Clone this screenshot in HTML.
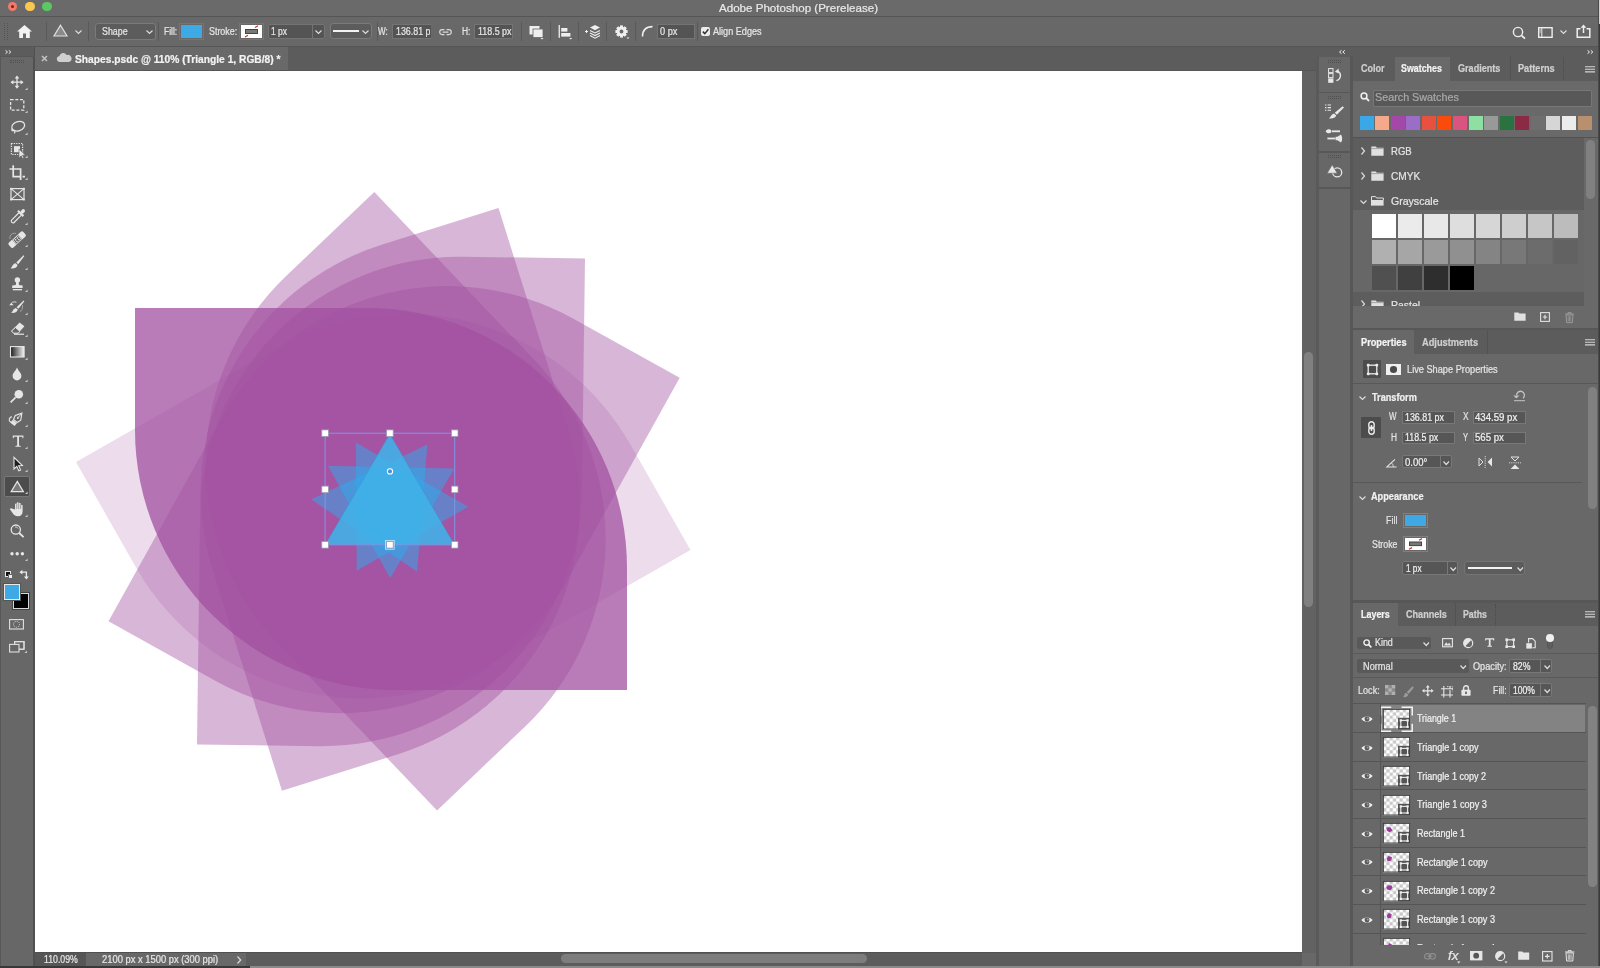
<!DOCTYPE html>
<html><head><meta charset="utf-8"><title>Adobe Photoshop (Prerelease)</title>
<style>
*{box-sizing:border-box}
html,body{margin:0;padding:0}
body{width:1600px;height:968px;overflow:hidden;position:relative;background:#505050;will-change:transform;font-family:"Liberation Sans",sans-serif;font-size:10px;color:#e0e0e0;line-height:1}
.a{position:absolute}
.t{position:absolute;white-space:nowrap;line-height:12px;height:12px;-webkit-text-stroke:0.22px currentColor}
.b{font-weight:bold}
.sep{position:absolute;width:1px}
.inp{position:absolute;background:#545454;border:1px solid #747474;border-radius:2px}
.ic{position:absolute;overflow:visible}
svg{display:block}
</style></head><body>

<!-- part_top -->
<div class="a" style="left:0px;top:0px;width:1600px;height:16px;background:#6a6a6a;"></div>
<div class="a" style="left:7.6px;top:1.7px;width:9.8px;height:9.8px;background:#f07a6c;border-radius:50%"></div>
<div class="a" style="left:10.8px;top:4.9px;width:3.4px;height:3.4px;background:#8b1a10;border-radius:50%"></div>
<div class="a" style="left:24.8px;top:1.7px;width:9.8px;height:9.8px;background:#f8c850;border-radius:50%"></div>
<div class="a" style="left:42.1px;top:1.7px;width:9.8px;height:9.8px;background:#5cc862;border-radius:50%"></div>
<div class="t" style="left:719px;top:2px;font-size:11.5px;color:#e8e8e8;transform-origin:0 0;transform:scaleX(1.0069);">Adobe Photoshop (Prerelease)</div>
<div class="a" style="left:0px;top:16px;width:1600px;height:1px;background:#555;"></div>
<div class="a" style="left:0px;top:17px;width:1600px;height:29px;background:#686868;"></div>
<div class="a" style="left:0px;top:46px;width:1600px;height:1px;background:#555;"></div>
<div class="a" style="left:4px;top:23px;width:2px;height:17px;background:transparent;border-left:1px dotted #555;border-right:1px dotted #555;width:4px"></div>
<svg class="ic" style="left:17px;top:25px" width="15" height="13" viewBox="0 0 15 13"><path d="M7.5 0 L0 6.6 L2.2 6.6 L2.2 13 L6 13 L6 8.6 L9 8.6 L9 13 L12.8 13 L12.8 6.6 L15 6.6 Z" fill="#f2f2f2"/></svg>
<div class="sep" style="left:46px;top:22px;height:19px;background:#595959"></div>
<svg class="ic" style="left:53px;top:24px" width="15" height="13" viewBox="0 0 15 13"><path d="M7.5 1.2 L14 12 L1 12 Z" fill="#8a8a8a" stroke="#e0e0e0" stroke-width="1.2" stroke-linejoin="miter"/></svg>
<svg class="ic" style="left:75px;top:30px" width="7" height="4" viewBox="0 0 7 4"><path d="M0.5 0.5 L3.5 3.5 L6.5 0.5" stroke="#dcdcdc" fill="none" stroke-width="1.2"/></svg>
<div class="sep" style="left:88px;top:22px;height:19px;background:#595959"></div>
<div class="inp" style="left:95px;top:23px;width:61px;height:17px;background:#5c5c5c;border-color:#7a7a7a;border-radius:3px"></div>
<div class="t" style="left:101.9px;top:25.5px;font-size:10px;color:#e6e6e6;transform-origin:0 0;transform:scaleX(0.8851);">Shape</div>
<svg class="ic" style="left:146px;top:30px" width="7" height="4" viewBox="0 0 7 4"><path d="M0.5 0.5 L3.5 3.5 L6.5 0.5" stroke="#dcdcdc" fill="none" stroke-width="1.2"/></svg>
<div class="sep" style="left:158px;top:22px;height:19px;background:#595959"></div>
<div class="t" style="left:163.7px;top:25.5px;font-size:10px;color:#e6e6e6;transform-origin:0 0;transform:scaleX(0.8482);">Fill:</div>
<div class="a" style="left:179px;top:23px;width:25px;height:17px;background:transparent;border:1px solid #747474"></div>
<div class="a" style="left:181px;top:25px;width:21px;height:13px;background:#3fa9e6;"></div>
<div class="t" style="left:208.7px;top:25.5px;font-size:10px;color:#e6e6e6;transform-origin:0 0;transform:scaleX(0.8899);">Stroke:</div>
<div class="a" style="left:239px;top:23px;width:25px;height:17px;background:transparent;border:1px solid #747474"></div>
<div class="a" style="left:241px;top:25px;width:21px;height:13px;background:#ffffff;"></div>
<svg class="ic" style="left:241px;top:25px" width="21" height="13" viewBox="0 0 21 13"><rect x="4.5" y="4.5" width="12" height="4" fill="#777" stroke="#444" stroke-width="1"/><path d="M14 2.5 L17 0.8 M4 12 L7 10.3" stroke="#c0392b" stroke-width="1.2"/></svg>
<div class="inp" style="left:268px;top:24px;width:57px;height:15px;border-radius:2px"></div>
<div class="a" style="left:312px;top:25px;width:1px;height:13px;background:#747474;"></div>
<div class="t" style="left:271.2px;top:25.5px;font-size:10px;color:#e6e6e6;transform-origin:0 0;transform:scaleX(0.8516);">1 px</div>
<svg class="ic" style="left:315px;top:30px" width="7" height="4" viewBox="0 0 7 4"><path d="M0.5 0.5 L3.5 3.5 L6.5 0.5" stroke="#dcdcdc" fill="none" stroke-width="1.2"/></svg>
<div class="inp" style="left:330px;top:23px;width:42px;height:16px;background:#5c5c5c;border-color:#7a7a7a;border-radius:3px"></div>
<div class="a" style="left:333px;top:30px;width:26px;height:2px;background:#f2f2f2;"></div>
<svg class="ic" style="left:362px;top:30px" width="7" height="4" viewBox="0 0 7 4"><path d="M0.5 0.5 L3.5 3.5 L6.5 0.5" stroke="#dcdcdc" fill="none" stroke-width="1.2"/></svg>
<div class="sep" style="left:377px;top:22px;height:19px;background:#595959"></div>
<div class="t" style="left:377.9px;top:25.5px;font-size:10px;color:#e6e6e6;transform-origin:0 0;transform:scaleX(0.8135);">W:</div>
<div class="inp" style="left:392px;top:24px;width:39px;height:15px;border-radius:0;border-right:none"></div>
<div class="a" style="left:395.5px;top:24px;width:34.5px;height:15px;overflow:hidden"><div class="t" style="left:0px;top:1.5px;font-size:10px;color:#e6e6e6;transform-origin:0 0;transform:scaleX(0.8876);">136.81 px</div></div>
<svg class="ic" style="left:439.2px;top:28.6px" width="13" height="6.2" viewBox="0 0 13 6.2"><path d="M5.4 0.6 L3.2 0.6 A2.5 2.5 0 0 0 3.2 5.6 L5.4 5.6 M7.6 0.6 L9.8 0.6 A2.5 2.5 0 0 1 9.8 5.6 L7.6 5.6 M3.6 3.1 L9.4 3.1" fill="none" stroke="#dcdcdc" stroke-width="1.15"/></svg>
<div class="t" style="left:461.6px;top:25.5px;font-size:10px;color:#e6e6e6;transform-origin:0 0;transform:scaleX(0.8400);">H:</div>
<div class="inp" style="left:474px;top:24px;width:39px;height:15px;border-radius:0"></div>
<div class="t" style="left:477.5px;top:25.5px;font-size:10px;color:#e6e6e6;transform-origin:0 0;transform:scaleX(0.8904);">118.5 px</div>
<div class="sep" style="left:521px;top:22px;height:19px;background:#595959"></div>
<svg class="ic" style="left:529px;top:25px" width="15" height="15" viewBox="0 0 15 15"><rect x="0.5" y="1" width="10" height="8.5" fill="#efefef"/><rect x="4" y="4" width="10" height="8.5" fill="#efefef" stroke="#686868" stroke-width="0.8"/><path d="M11.5 13 L14.5 13 L13 14.6 Z" fill="#efefef"/></svg>
<div class="sep" style="left:550px;top:22px;height:19px;background:#595959"></div>
<svg class="ic" style="left:558px;top:25px" width="15" height="15" viewBox="0 0 15 15"><rect x="0.6" y="0" width="1.3" height="12.8" fill="#efefef"/><rect x="3.2" y="3" width="6.2" height="3.6" fill="#efefef"/><rect x="3.2" y="8" width="9.2" height="3.6" fill="#efefef"/><path d="M11.2 13 L14.2 13 L12.7 14.6 Z" fill="#efefef"/></svg>
<div class="sep" style="left:578px;top:22px;height:19px;background:#595959"></div>
<svg class="ic" style="left:584px;top:24px" width="17" height="16" viewBox="0 0 17 16"><path d="M1 7.5 L4 7.5 M2.5 6 L2.5 9" stroke="#efefef" stroke-width="1"/><path d="M11 1 L16 3.6 L11 6.2 L6 3.6 Z" fill="#efefef"/><path d="M6 6.4 L11 9 L16 6.4 M6 9 L11 11.6 L16 9 M6 11.6 L11 14.2 L16 11.6" stroke="#efefef" stroke-width="1.1" fill="none"/></svg>
<div class="sep" style="left:606px;top:22px;height:19px;background:#595959"></div>
<svg class="ic" style="left:614.5px;top:25px" width="15" height="15" viewBox="0 0 15 15"><g transform="translate(6.5,6.5)"><rect x="-1.5" y="-6.1" width="3" height="3.4" fill="#efefef" transform="rotate(0)"/><rect x="-1.5" y="-6.1" width="3" height="3.4" fill="#efefef" transform="rotate(45)"/><rect x="-1.5" y="-6.1" width="3" height="3.4" fill="#efefef" transform="rotate(90)"/><rect x="-1.5" y="-6.1" width="3" height="3.4" fill="#efefef" transform="rotate(135)"/><rect x="-1.5" y="-6.1" width="3" height="3.4" fill="#efefef" transform="rotate(180)"/><rect x="-1.5" y="-6.1" width="3" height="3.4" fill="#efefef" transform="rotate(225)"/><rect x="-1.5" y="-6.1" width="3" height="3.4" fill="#efefef" transform="rotate(270)"/><rect x="-1.5" y="-6.1" width="3" height="3.4" fill="#efefef" transform="rotate(315)"/><circle r="3.4" fill="none" stroke="#efefef" stroke-width="2.9"/></g><path d="M11.5 12.4 L14.5 12.4 L13 14 Z" fill="#efefef"/></svg>
<div class="sep" style="left:635px;top:22px;height:19px;background:#595959"></div>
<svg class="ic" style="left:641px;top:25px" width="12" height="12" viewBox="0 0 12 12"><path d="M1.5 11.5 C1.5 5 5 1.6 11.5 1.6" fill="none" stroke="#efefef" stroke-width="1.6"/></svg>
<div class="inp" style="left:657px;top:24px;width:38px;height:15px;border-radius:0"></div>
<div class="t" style="left:659.6px;top:25.5px;font-size:10px;color:#e6e6e6;transform-origin:0 0;transform:scaleX(0.9203);">0 px</div>
<div class="sep" style="left:697px;top:22px;height:19px;background:#595959"></div>
<div class="a" style="left:700.5px;top:27px;width:9px;height:9px;background:#ececec;border-radius:2px"></div>
<svg class="ic" style="left:700.5px;top:27px" width="9" height="9" viewBox="0 0 9 9"><path d="M1.8 4.6 L3.8 6.6 L7.4 2.2" fill="none" stroke="#333" stroke-width="1.5"/></svg>
<div class="t" style="left:712.9px;top:25.5px;font-size:10px;color:#e6e6e6;transform-origin:0 0;transform:scaleX(0.9105);">Align Edges</div>
<svg class="ic" style="left:1512px;top:26px" width="15" height="14" viewBox="0 0 15 14"><circle cx="6" cy="6" r="4.6" fill="none" stroke="#efefef" stroke-width="1.4"/><path d="M9.4 9.4 L13 12.6" stroke="#efefef" stroke-width="1.8"/></svg>
<svg class="ic" style="left:1538px;top:27px" width="15" height="11" viewBox="0 0 15 11"><rect x="0.7" y="0.7" width="13.4" height="9.6" fill="none" stroke="#efefef" stroke-width="1.4"/><path d="M3.8 1 L3.8 10" stroke="#efefef" stroke-width="1"/><path d="M1.6 3 L3 3 M1.6 5 L3 5" stroke="#efefef" stroke-width="0.8"/></svg>
<svg class="ic" style="left:1560px;top:30px" width="7" height="4" viewBox="0 0 7 4"><path d="M0.5 0.5 L3.5 3.5 L6.5 0.5" stroke="#dcdcdc" fill="none" stroke-width="1.2"/></svg>
<svg class="ic" style="left:1576px;top:24px" width="15" height="14" viewBox="0 0 15 14"><path d="M4.5 4.7 L1.2 4.7 L1.2 13.2 L13.8 13.2 L13.8 4.7 L10.5 4.7" fill="none" stroke="#efefef" stroke-width="1.5"/><path d="M7.5 9 L7.5 2" stroke="#efefef" stroke-width="1.5"/><path d="M4.6 3.8 L7.5 0.6 L10.4 3.8 Z" fill="#efefef"/></svg>
<div class="a" style="left:0px;top:47px;width:1600px;height:24px;background:#5c5c5c;"></div>
<div class="a" style="left:35px;top:47px;width:253px;height:24px;background:#696969;"></div>
<svg class="ic" style="left:41px;top:55px" width="7" height="7" viewBox="0 0 7 7"><path d="M1 1 L6 6 M6 1 L1 6" stroke="#c4c4c4" stroke-width="1.5"/></svg>
<svg class="ic" style="left:56px;top:52px" width="16" height="10" viewBox="0 0 16 10"><path d="M3.2 10 A3.1 3.1 0 0 1 3.4 3.9 A3.9 3.9 0 0 1 10.6 3 A3.5 3.5 0 0 1 13 10 Z" fill="#cfcfcf"/></svg>
<div class="t b" style="left:75px;top:53px;font-size:10.5px;color:#f2f2f2;transform-origin:0 0;transform:scaleX(0.9740);">Shapes.psdc @ 110% (Triangle 1, RGB/8) *</div>
<div class="a" style="left:35px;top:70px;width:1284px;height:1px;background:#565656;"></div>
<div class="a" style="left:35px;top:71px;width:1267px;height:881px;background:#ffffff;"></div>
<!-- part_tools -->
<div class="a" style="left:0px;top:47px;width:34px;height:921px;background:#676767;"></div>
<div class="a" style="left:0px;top:47px;width:1px;height:921px;background:#585858;"></div>
<div class="a" style="left:33.3px;top:47px;width:1.7px;height:921px;background:#505050;"></div>
<div class="a" style="left:0px;top:47px;width:34px;height:9.5px;background:#5c5c5c;"></div>
<div class="a" style="left:0px;top:56px;width:34px;height:1px;background:#565656;"></div>
<svg class="ic" style="left:5px;top:50px" width="7" height="4" viewBox="0 0 7 4"><path d="M0.5 0.3 L2.5 2 L0.5 3.7 M3.8 0.3 L5.8 2 L3.8 3.7" stroke="#f0f0f0" stroke-width="1" fill="none"/></svg>
<div class="a" style="left:10px;top:60px;width:14px;height:3px;background:transparent;border-top:1px dotted #505050;border-bottom:1px dotted #505050"></div>
<div class="a" style="left:3.6px;top:475.8px;width:26.8px;height:21.2px;background:#4c4c4c;border:1px solid #787878;border-radius:2px"></div>
<svg class="ic" style="left:5px;top:71.25px" width="24" height="22.5" viewBox="0 0 24 22.5"><path d="M12 4.6 L14.3 7.6 L12.65 7.6 L12.65 10.55 L15.6 10.55 L15.6 8.9 L18.6 11.2 L15.6 13.5 L15.6 11.85 L12.65 11.85 L12.65 14.8 L14.3 14.8 L12 17.8 L9.7 14.8 L11.35 14.8 L11.35 11.85 L8.4 11.85 L8.4 13.5 L5.4 11.2 L8.4 8.9 L8.4 10.55 L11.35 10.55 L11.35 7.6 L9.7 7.6 Z" fill="#e6e6e6"/><path d="M22.6 16.4 L22.6 19 L20 19 Z" fill="#c8c8c8"/></svg>
<svg class="ic" style="left:5px;top:93.69px" width="24" height="22.5" viewBox="0 0 24 22.5"><rect x="5.6" y="5.6" width="13.2" height="10.6" fill="none" stroke="#e6e6e6" stroke-width="1.3" stroke-dasharray="3 1.7"/><path d="M22.6 16.4 L22.6 19 L20 19 Z" fill="#c8c8c8"/></svg>
<svg class="ic" style="left:5px;top:116.13px" width="24" height="22.5" viewBox="0 0 24 22.5"><ellipse cx="13.2" cy="10.2" rx="6.6" ry="4.6" fill="none" stroke="#e6e6e6" stroke-width="1.3" transform="rotate(-18 13.2 10.2)"/><path d="M7.3 13 C6.4 13.6 6.8 15 8.4 14.6 C10 14.4 10.4 15.8 9.3 17.3" fill="none" stroke="#e6e6e6" stroke-width="1.2"/><path d="M22.6 16.4 L22.6 19 L20 19 Z" fill="#c8c8c8"/></svg>
<svg class="ic" style="left:5px;top:138.57px" width="24" height="22.5" viewBox="0 0 24 22.5"><rect x="6.4" y="4.5" width="11.2" height="11" fill="none" stroke="#e6e6e6" stroke-width="1.2" stroke-dasharray="1.3 1.1"/><rect x="9" y="7.2" width="6" height="6" fill="#e6e6e6"/><path d="M14 10 L14 19 L16.2 16.8 L17.6 19.6 L18.9 19 L17.5 16.2 L20.4 16.2 Z" fill="#e6e6e6" stroke="#676767" stroke-width="0.6"/><path d="M22.6 16.4 L22.6 19 L20 19 Z" fill="#c8c8c8"/></svg>
<svg class="ic" style="left:5px;top:161.01px" width="24" height="22.5" viewBox="0 0 24 22.5"><path d="M8.2 4.2 L8.2 15.6 L15 15.6 M4.5 8 L15.6 8 L15.6 19 M17.5 15.6 L20 15.6" fill="none" stroke="#e6e6e6" stroke-width="1.7"/><path d="M22.6 16.4 L22.6 19 L20 19 Z" fill="#c8c8c8"/></svg>
<svg class="ic" style="left:5px;top:183.45px" width="24" height="22.5" viewBox="0 0 24 22.5"><rect x="6" y="5.6" width="13" height="11" fill="none" stroke="#e6e6e6" stroke-width="1.2"/><path d="M6 5.6 L19 16.6 M19 5.6 L6 16.6" stroke="#e6e6e6" stroke-width="1.1"/><rect x="5.2" y="4.8" width="1.8" height="1.8" fill="#e6e6e6"/><rect x="18" y="4.8" width="1.8" height="1.8" fill="#e6e6e6"/><rect x="5.2" y="15.6" width="1.8" height="1.8" fill="#e6e6e6"/><rect x="18" y="15.6" width="1.8" height="1.8" fill="#e6e6e6"/></svg>
<svg class="ic" style="left:5px;top:205.89px" width="24" height="22.5" viewBox="0 0 24 22.5"><g transform="rotate(45 12 11)"><rect x="10.4" y="0.5" width="3.4" height="4.5" rx="1.6" fill="#e6e6e6"/><rect x="8.3" y="4.8" width="7.6" height="2.2" fill="#e6e6e6"/><path d="M10.4 7 L10.4 17.4 Q12.1 19.4 13.8 17.4 L13.8 7" fill="none" stroke="#e6e6e6" stroke-width="1.2"/></g><path d="M22.6 16.4 L22.6 19 L20 19 Z" fill="#c8c8c8"/></svg>
<svg class="ic" style="left:5px;top:228.33px" width="24" height="22.5" viewBox="0 0 24 22.5"><g transform="rotate(-42 12 11.5)"><rect x="2.2" y="8.4" width="19.6" height="6.6" rx="1.8" fill="#e6e6e6"/><rect x="8" y="8.4" width="8" height="6.6" fill="#676767"/><rect x="8.6" y="9" width="6.8" height="5.4" fill="none" stroke="#e6e6e6" stroke-width="0.9"/><rect x="10" y="10" width="1.4" height="1.3" fill="#e6e6e6"/><rect x="12.6" y="10" width="1.4" height="1.3" fill="#e6e6e6"/><rect x="10" y="12.2" width="1.4" height="1.3" fill="#e6e6e6"/><rect x="12.6" y="12.2" width="1.4" height="1.3" fill="#e6e6e6"/></g><path d="M5 10.5 A4.4 4.4 0 0 1 11 5.6" fill="none" stroke="#e6e6e6" stroke-width="0.9" stroke-dasharray="1 1"/><path d="M22.6 16.4 L22.6 19 L20 19 Z" fill="#c8c8c8"/></svg>
<svg class="ic" style="left:5px;top:250.77px" width="24" height="22.5" viewBox="0 0 24 22.5"><path d="M18.6 4.2 L19.4 4.9 L13.2 13.2 L11.3 11.6 Z" fill="#e6e6e6"/><path d="M10.6 12.3 L12.6 14 C12.2 17 8.6 17.8 5.6 17.4 C7.6 16 7.2 13 10.6 12.3 Z" fill="#e6e6e6"/><path d="M22.6 16.4 L22.6 19 L20 19 Z" fill="#c8c8c8"/></svg>
<svg class="ic" style="left:5px;top:273.21px" width="24" height="22.5" viewBox="0 0 24 22.5"><circle cx="12.4" cy="7" r="2.7" fill="#e6e6e6"/><path d="M11.2 8.5 L13.6 8.5 L14 12 L17.6 12.4 L17.6 15 L7.2 15 L7.2 12.4 L10.8 12 Z" fill="#e6e6e6"/><rect x="7.8" y="16" width="9.2" height="1.3" fill="#e6e6e6"/><path d="M22.6 16.4 L22.6 19 L20 19 Z" fill="#c8c8c8"/></svg>
<svg class="ic" style="left:5px;top:295.65px" width="24" height="22.5" viewBox="0 0 24 22.5"><path d="M18.6 4.6 L19.4 5.3 L13.4 12.8 L11.6 11.3 Z" fill="#e6e6e6"/><path d="M10.9 12 L12.8 13.6 C12.4 16.5 9 17.3 6.2 17 C8 15.6 7.7 12.8 10.9 12 Z" fill="#e6e6e6"/><path d="M4.3 9.3 L6.3 6.8 L8.6 9.3 Z" fill="#e6e6e6"/><path d="M6.4 7 C7.6 5.8 9.6 5.6 11.4 6.2" fill="none" stroke="#e6e6e6" stroke-width="0.9"/><path d="M17.6 9.5 L17.2 13.6 L15 15.4" fill="none" stroke="#e6e6e6" stroke-width="0.9" stroke-dasharray="1 1"/><path d="M22.6 16.4 L22.6 19 L20 19 Z" fill="#c8c8c8"/></svg>
<svg class="ic" style="left:5px;top:318.09px" width="24" height="22.5" viewBox="0 0 24 22.5"><path d="M14.6 4.6 L19.4 8.2 L13.2 15.2 L8.6 15.2 L6.2 13.2 Z" fill="#e6e6e6"/><path d="M10.4 9.4 L14.8 13.2 L13.2 15.2 L8.8 15.2 L6.4 13.2 Z" fill="#676767" stroke="#e6e6e6" stroke-width="1"/><rect x="9" y="15.6" width="10" height="1.2" fill="#e6e6e6"/><path d="M22.6 16.4 L22.6 19 L20 19 Z" fill="#c8c8c8"/></svg>
<svg class="ic" style="left:5px;top:340.53px" width="24" height="22.5" viewBox="0 0 24 22.5"><defs><linearGradient id="tg" x1="0" x2="1"><stop offset="0" stop-color="#1c1c1c"/><stop offset="1" stop-color="#f2f2f2"/></linearGradient></defs><rect x="5.5" y="5.6" width="13.6" height="10.4" fill="url(#tg)" stroke="#e6e6e6" stroke-width="1.1"/><path d="M22.6 16.4 L22.6 19 L20 19 Z" fill="#c8c8c8"/></svg>
<svg class="ic" style="left:5px;top:362.97px" width="24" height="22.5" viewBox="0 0 24 22.5"><path d="M12 4.6 C13 7.6 16.4 10.2 16.4 13 A4.4 4.4 0 0 1 7.6 13 C7.6 10.2 11 7.6 12 4.6 Z" fill="#e6e6e6"/><path d="M22.6 16.4 L22.6 19 L20 19 Z" fill="#c8c8c8"/></svg>
<svg class="ic" style="left:5px;top:385.41px" width="24" height="22.5" viewBox="0 0 24 22.5"><circle cx="13.8" cy="9.2" r="4.3" fill="#e6e6e6"/><path d="M10.6 12.4 L5.6 17.4" stroke="#e6e6e6" stroke-width="1.6"/><path d="M22.6 16.4 L22.6 19 L20 19 Z" fill="#c8c8c8"/></svg>
<svg class="ic" style="left:5px;top:407.85px" width="24" height="22.5" viewBox="0 0 24 22.5"><g transform="rotate(40 12 11)"><path d="M12 3.4 L15.6 9.4 L14.4 13.6 L9.6 13.6 L8.4 9.4 Z" fill="none" stroke="#e6e6e6" stroke-width="1.1"/><path d="M12 4 L12 9" stroke="#e6e6e6" stroke-width="0.9"/><circle cx="12" cy="9.6" r="1" fill="#e6e6e6"/><rect x="9.3" y="14.4" width="5.4" height="3.6" fill="#e6e6e6"/></g><path d="M6.8 8.6 C4.2 9.4 3.4 12.4 5.2 13.8 C6.2 14.6 7.8 14.4 8.4 13.2" fill="none" stroke="#e6e6e6" stroke-width="1.1"/><path d="M22.6 16.4 L22.6 19 L20 19 Z" fill="#c8c8c8"/></svg>
<svg class="ic" style="left:5px;top:430.29px" width="24" height="22.5" viewBox="0 0 24 22.5"><path d="M7.8 5.6 L18.4 5.6 L18.4 8.2 L17.6 8.2 L17.2 6.8 L14 6.8 L14 15.6 L15.8 16 L15.8 16.8 L10.4 16.8 L10.4 16 L12.2 15.6 L12.2 6.8 L9 6.8 L8.6 8.2 L7.8 8.2 Z" fill="#e6e6e6"/><path d="M22.6 16.4 L22.6 19 L20 19 Z" fill="#c8c8c8"/></svg>
<svg class="ic" style="left:5px;top:452.73px" width="24" height="22.5" viewBox="0 0 24 22.5"><path d="M9 4.4 L9 16 L11.8 13.4 L13.8 17.8 L15.6 17 L13.6 12.8 L17.4 12.6 Z" fill="#1e1e1e" stroke="#e6e6e6" stroke-width="1.1" stroke-linejoin="miter"/><path d="M22.6 16.4 L22.6 19 L20 19 Z" fill="#c8c8c8"/></svg>
<svg class="ic" style="left:5px;top:475.17px" width="24" height="22.5" viewBox="0 0 24 22.5"><path d="M12.3 6.4 L18.4 16.6 L6.2 16.6 Z" fill="#7a7a7a" stroke="#e6e6e6" stroke-width="1.2"/><path d="M22.6 16.4 L22.6 19 L20 19 Z" fill="#c8c8c8"/></svg>
<svg class="ic" style="left:5px;top:497.61px" width="24" height="22.5" viewBox="0 0 24 22.5"><g transform="translate(12 11.4) scale(1.22 1.08) translate(-11.2 -11.4)"><path d="M9.6 11.4 L9.6 6.4 Q10.3 5.4 11 6.4 L11 5.2 Q11.8 4.2 12.6 5.2 L12.6 5.6 Q13.4 4.8 14.2 5.8 L14.2 7.4 Q15 6.6 15.8 7.6 L15.8 13 C15.8 16 14.4 17.8 12 17.8 C9.6 17.8 8.6 16.6 7.4 14.6 L5.4 11.2 Q5.8 10 7 10.6 Z" fill="#e6e6e6"/><path d="M11 6.4 L11 11 M12.6 5.6 L12.6 11 M14.2 7 L14.2 11" stroke="#676767" stroke-width="0.5"/></g><path d="M22.6 16.4 L22.6 19 L20 19 Z" fill="#c8c8c8"/></svg>
<svg class="ic" style="left:5px;top:520.05px" width="24" height="22.5" viewBox="0 0 24 22.5"><circle cx="10.8" cy="9.6" r="4.6" fill="none" stroke="#e6e6e6" stroke-width="1.3"/><path d="M14.2 13 L18.6 17.2" stroke="#e6e6e6" stroke-width="1.8"/><path d="M10 7 A3 3 0 0 1 13.2 8.6" fill="none" stroke="#e6e6e6" stroke-width="0.8"/></svg>
<svg class="ic" style="left:5px;top:542.49px" width="24" height="22.5" viewBox="0 0 24 22.5"><circle cx="7" cy="11.8" r="1.7" fill="#e6e6e6"/><circle cx="12.2" cy="11.8" r="1.7" fill="#e6e6e6"/><circle cx="17.4" cy="11.8" r="1.7" fill="#e6e6e6"/><path d="M22.6 16.4 L22.6 19 L20 19 Z" fill="#c8c8c8"/></svg>
<div class="a" style="left:4.5px;top:570.5px;width:6px;height:6px;background:#111;border:1px solid #e6e6e6"></div>
<div class="a" style="left:7.5px;top:573.5px;width:5.5px;height:5.5px;background:#ececec;border:0.5px solid #676767"></div>
<svg class="ic" style="left:19px;top:569px" width="10" height="11" viewBox="0 0 10 11"><path d="M3 3.2 L7.4 3.2 L7.4 8" fill="none" stroke="#ececec" stroke-width="1.3"/><path d="M0.4 3.2 L3.4 0.8 L3.4 5.6 Z" fill="#ececec"/><path d="M5 7.4 L9.8 7.4 L7.4 10.4 Z" fill="#ececec"/></svg>
<div class="a" style="left:13px;top:592.5px;width:16px;height:16px;background:#000;border:1.5px solid #d8d8d8;outline:0.5px solid #444"></div>
<div class="a" style="left:4px;top:584px;width:16px;height:16px;background:#3fa9e6;border:1.3px solid #e8e8e8;outline:0.7px solid #555"></div>
<svg class="ic" style="left:9px;top:619px" width="15" height="11" viewBox="0 0 15 11"><rect x="0.6" y="0.6" width="13.8" height="9.4" fill="none" stroke="#e0e0e0" stroke-width="1.1"/><circle cx="7.5" cy="5.3" r="3" fill="none" stroke="#e0e0e0" stroke-width="0.9" stroke-dasharray="1 1"/></svg>
<svg class="ic" style="left:9px;top:641px" width="19" height="13" viewBox="0 0 19 13"><rect x="5.6" y="0.6" width="9.4" height="7.6" fill="#676767" stroke="#e0e0e0" stroke-width="1.1"/><rect x="0.6" y="3.4" width="9.4" height="7.6" fill="#676767" stroke="#e0e0e0" stroke-width="1.1"/><path d="M5.6 3.4 L5.6 0.6 L15 0.6 L15 8.2 L10 8.2" fill="none" stroke="#e0e0e0" stroke-width="1.1"/><path d="M18 9.4 L18 12 L15.4 12 Z" fill="#c8c8c8"/></svg>
<!-- part_art -->
<svg class="ic" style="left:35px;top:71px;overflow:hidden" width="1267" height="881" viewBox="0 0 1267 881"><path d="M0 0 L232.0 0 A260.0 260.0 0 0 1 492.0 260.0 L492.0 382.0 L260.0 382.0 A260.0 260.0 0 0 1 0 122.0 Z" transform="translate(655.5 479) rotate(-209.68) scale(0.9966)" fill="#a250a0" fill-opacity="0.2"/><path d="M0 0 L232.0 0 A260.0 260.0 0 0 1 492.0 260.0 L492.0 382.0 L260.0 382.0 A260.0 260.0 0 0 1 0 122.0 Z" transform="translate(644.7 306.8) rotate(119.08) scale(0.9969)" fill="#a250a0" fill-opacity="0.42"/><path d="M0 0 L232.0 0 A260.0 260.0 0 0 1 492.0 260.0 L492.0 382.0 L260.0 382.0 A260.0 260.0 0 0 1 0 122.0 Z" transform="translate(550 187.39999999999998) rotate(90.77) scale(0.9985)" fill="#a250a0" fill-opacity="0.42"/><path d="M0 0 L232.0 0 A260.0 260.0 0 0 1 492.0 260.0 L492.0 382.0 L260.0 382.0 A260.0 260.0 0 0 1 0 122.0 Z" transform="translate(463.5 137) rotate(72.56) scale(0.9980)" fill="#a250a0" fill-opacity="0.42"/><path d="M0 0 L232.0 0 A260.0 260.0 0 0 1 492.0 260.0 L492.0 382.0 L260.0 382.0 A260.0 260.0 0 0 1 0 122.0 Z" transform="translate(339.3 121) rotate(46.38) scale(0.9980)" fill="#a250a0" fill-opacity="0.42"/><path d="M0 0 L232.0 0 A260.0 260.0 0 0 1 492.0 260.0 L492.0 382.0 L260.0 382.0 A260.0 260.0 0 0 1 0 122.0 Z" transform="translate(100 237) rotate(0.00) scale(1.0000)" fill="#a250a0" fill-opacity="0.75"/><path d="M433.3 435.7 L321.7 499.8 L320.8 371.5 Z" fill="#2babed" fill-opacity="0.5"/><path d="M419.3 397.6 L355.2 507.3 L292.9 394.8 Z" fill="#2babed" fill-opacity="0.5"/><path d="M392.4 373.4 L382.1 500.8 L276.2 428.3 Z" fill="#2babed" fill-opacity="0.5"/><path d="M354.8 363.0 L290.1 473.8 L419.5 473.8 Z" fill="#42b0e7" fill-opacity="0.9" stroke="#3a8ed0" stroke-width="0.6" stroke-opacity="0.7"/><rect x="290.1" y="362.2" width="129.6" height="111.6" fill="none" stroke="#7f96e6" stroke-width="1"/><rect x="286.8" y="358.9" width="6.6" height="6.6" fill="#ffffff" stroke="#9a9ab0" stroke-width="0.8"/><rect x="286.8" y="415.1" width="6.6" height="6.6" fill="#ffffff" stroke="#9a9ab0" stroke-width="0.8"/><rect x="286.8" y="470.5" width="6.6" height="6.6" fill="#ffffff" stroke="#9a9ab0" stroke-width="0.8"/><rect x="351.6" y="358.9" width="6.6" height="6.6" fill="#ffffff" stroke="#9a9ab0" stroke-width="0.8"/><rect x="351.6" y="470.5" width="6.6" height="6.6" fill="#ffffff" stroke="#9a9ab0" stroke-width="0.8"/><rect x="416.4" y="358.9" width="6.6" height="6.6" fill="#ffffff" stroke="#9a9ab0" stroke-width="0.8"/><rect x="416.4" y="415.1" width="6.6" height="6.6" fill="#ffffff" stroke="#9a9ab0" stroke-width="0.8"/><rect x="416.4" y="470.5" width="6.6" height="6.6" fill="#ffffff" stroke="#9a9ab0" stroke-width="0.8"/><rect x="350.6" y="469.6" width="8.6" height="8.6" fill="none" stroke="#e8e8f4" stroke-width="0.7"/><circle cx="355" cy="400.4" r="2.6" fill="#4a8fd8" stroke="#ffffff" stroke-width="1.1"/></svg>
<div class="a" style="left:35px;top:952px;width:1267px;height:16px;background:#686868;"></div>
<div class="a" style="left:35px;top:952px;width:1267px;height:1.2px;background:#505050;"></div>
<div class="a" style="left:35px;top:953.2px;width:51.3px;height:13px;background:#565656;"></div>
<div class="t" style="left:44.4px;top:953.6px;font-size:10px;color:#e6e6e6;transform-origin:0 0;transform:scaleX(0.8723);">110.09%</div>
<div class="t" style="left:102.2px;top:953.6px;font-size:10px;color:#e6e6e6;transform-origin:0 0;transform:scaleX(0.9372);">2100 px x 1500 px (300 ppi)</div>
<svg class="ic" style="left:237.4px;top:956px" width="4.2" height="8" viewBox="0 0 4.2 8"><path d="M0.5 0.5 L3.7 4.0 L0.5 7.5" stroke="#dcdcdc" fill="none" stroke-width="1.2"/></svg>
<div class="a" style="left:246px;top:953.2px;width:1056px;height:13px;background:#5c5c5c;"></div>
<div class="a" style="left:561.4px;top:954px;width:306px;height:9.4px;background:#7d7d7d;border-radius:4.7px"></div>
<!-- part_right1 -->
<div class="a" style="left:1302px;top:71px;width:13.5px;height:897px;background:#626262;"></div>
<div class="a" style="left:1304.4px;top:352.3px;width:8.6px;height:254.7px;background:#808080;border-radius:5px"></div>
<div class="a" style="left:1315.5px;top:56px;width:3.5px;height:912px;background:#5a5a5a;"></div>
<div class="a" style="left:1319px;top:47px;width:281px;height:9.5px;background:#5c5c5c;"></div>
<svg class="ic" style="left:1339px;top:50px" width="7" height="4" viewBox="0 0 7 4"><path d="M2.5 0.3 L0.5 2 L2.5 3.7 M5.8 0.3 L3.8 2 L5.8 3.7" stroke="#f0f0f0" stroke-width="1" fill="none"/></svg>
<svg class="ic" style="left:1587px;top:50px" width="7" height="4" viewBox="0 0 7 4"><path d="M0.5 0.3 L2.5 2 L0.5 3.7 M3.8 0.3 L5.8 2 L3.8 3.7" stroke="#f0f0f0" stroke-width="1" fill="none"/></svg>
<div class="a" style="left:1319px;top:56.5px;width:31px;height:911.5px;background:#676767;"></div>
<div class="a" style="left:1319px;top:91.5px;width:31px;height:1.5px;background:#575757;"></div>
<div class="a" style="left:1319px;top:151px;width:31px;height:1.5px;background:#575757;"></div>
<div class="a" style="left:1319px;top:187px;width:31px;height:1.5px;background:#575757;"></div>
<div class="a" style="left:1328px;top:60px;width:13px;height:3px;background:transparent;border-top:1px dotted #505050;border-bottom:1px dotted #505050"></div>
<div class="a" style="left:1328px;top:95.5px;width:13px;height:3px;background:transparent;border-top:1px dotted #505050;border-bottom:1px dotted #505050"></div>
<div class="a" style="left:1328px;top:155px;width:13px;height:3px;background:transparent;border-top:1px dotted #505050;border-bottom:1px dotted #505050"></div>
<svg class="ic" style="left:1328px;top:68px" width="16" height="16" viewBox="0 0 16 16"><rect x="0.6" y="0.6" width="4.4" height="4" fill="none" stroke="#e8e8e8" stroke-width="1"/><rect x="0.6" y="5.6" width="4.4" height="4" fill="none" stroke="#e8e8e8" stroke-width="1"/><rect x="0.2" y="10.4" width="5.2" height="4.4" fill="#e8e8e8"/><path d="M8.4 12.6 C13.6 11 13.6 5 9.6 3.2" fill="none" stroke="#e8e8e8" stroke-width="1.4"/><path d="M6.8 3.8 L10.6 0.6 L10.8 5.6 Z" fill="#e8e8e8"/></svg>
<svg class="ic" style="left:1324px;top:103px" width="22" height="16" viewBox="0 0 22 16"><path d="M1 2 L2.4 2 M3.6 2 L7 2 M1 4.6 L2.4 4.6 M3.6 4.6 L7 4.6 M1 7.2 L2.4 7.2 M3.6 7.2 L7 7.2" stroke="#e8e8e8" stroke-width="1.1"/><path d="M18.6 3.2 L20 4.6 L12.8 11.8 L10.8 9.8 Z" fill="#e8e8e8"/><path d="M10 10.4 L12.2 12.6 C11.2 15.4 7.8 16 4.8 15.4 C7 14 7 11.2 10 10.4 Z" fill="#e8e8e8"/></svg>
<svg class="ic" style="left:1325px;top:128px" width="20" height="16" viewBox="0 0 20 16"><path d="M0.6 3.2 C2 0.8 5 1 6 2 L6 4.6 C5 5.8 2 5.8 0.6 3.2 Z" fill="#e8e8e8"/><rect x="6.6" y="2.4" width="8.4" height="1.8" fill="#e8e8e8"/><rect x="2.4" y="9.6" width="8" height="1.8" fill="#e8e8e8"/><path d="M10.6 8.8 L12.4 8.8 L16 6.4 C17.6 8.6 17.6 12.4 16 14.6 L12.4 12.2 L10.6 12.2 Z" fill="#e8e8e8"/></svg>
<svg class="ic" style="left:1327px;top:164px" width="17" height="15" viewBox="0 0 17 15"><circle cx="10.2" cy="8.4" r="4.5" fill="none" stroke="#e8e8e8" stroke-width="1.3"/><path d="M0.2 9.2 L5.2 0.8 L10.2 9.2 Z" fill="#e8e8e8" stroke="#676767" stroke-width="0.6"/></svg>
<div class="a" style="left:1350px;top:56px;width:3px;height:912px;background:#575757;"></div>
<div class="a" style="left:1598px;top:0px;width:1px;height:968px;background:#4a4a4a;"></div>
<div class="a" style="left:1599px;top:0px;width:1px;height:24px;background:#d0d0d0;"></div>
<div class="a" style="left:1599px;top:24px;width:1px;height:944px;background:#3a3a3a;"></div>
<div class="a" style="left:1353px;top:56.5px;width:245px;height:24px;background:#5c5c5c;"></div>
<div class="a" style="left:1394.5px;top:56.5px;width:55.5px;height:24px;background:#696969;"></div>
<div class="a" style="left:1509.5px;top:57px;width:1px;height:23px;background:transparent;border-left:1px dotted #4a4a4a"></div>
<div class="a" style="left:1563px;top:57px;width:1px;height:23px;background:transparent;border-left:1px dotted #4a4a4a"></div>
<div class="t b" style="left:1360.7px;top:63px;font-size:10px;color:#cfcfcf;transform-origin:0 0;transform:scaleX(0.9001);">Color</div>
<div class="t b" style="left:1401.2px;top:63px;font-size:10px;color:#f4f4f4;transform-origin:0 0;transform:scaleX(0.8843);">Swatches</div>
<div class="t b" style="left:1458.3px;top:63px;font-size:10px;color:#cfcfcf;transform-origin:0 0;transform:scaleX(0.9082);">Gradients</div>
<div class="t b" style="left:1517.8px;top:63px;font-size:10px;color:#cfcfcf;transform-origin:0 0;transform:scaleX(0.9171);">Patterns</div>
<svg class="ic" style="left:1584.5px;top:65.5px" width="10" height="7" viewBox="0 0 10 7"><path d="M0 0.7 L10 0.7 M0 3.3 L10 3.3 M0 5.9 L10 5.9" stroke="#d4d4d4" stroke-width="1.1"/></svg>
<div class="a" style="left:1353px;top:80.5px;width:245px;height:56.5px;background:#696969;"></div>
<svg class="ic" style="left:1359.5px;top:92px" width="10" height="10" viewBox="0 0 10 10"><circle cx="4" cy="4" r="2.9" fill="none" stroke="#f0f0f0" stroke-width="1.5"/><path d="M6.2 6.2 L9 9" stroke="#f0f0f0" stroke-width="1.8"/></svg>
<div class="inp" style="left:1373px;top:90px;width:218.5px;height:16.5px;background:#585858;border-color:#777;border-radius:1px"></div>
<div class="t" style="left:1374.5px;top:92.3px;font-size:10px;color:#a8a8a8;transform-origin:0 0;transform:scaleX(1.0767);">Search Swatches</div>
<div class="a" style="left:1359.6px;top:115.5px;width:14px;height:14px;background:#3aa8e6;"></div>
<div class="a" style="left:1375.2px;top:115.5px;width:14px;height:14px;background:#f4a98a;"></div>
<div class="a" style="left:1390.7px;top:115.5px;width:14px;height:14px;background:#a347a8;"></div>
<div class="a" style="left:1406.3px;top:115.5px;width:14px;height:14px;background:#9a6ec6;"></div>
<div class="a" style="left:1421.9px;top:115.5px;width:14px;height:14px;background:#e8503f;"></div>
<div class="a" style="left:1437.4px;top:115.5px;width:14px;height:14px;background:#fa4a0c;"></div>
<div class="a" style="left:1453.0px;top:115.5px;width:14px;height:14px;background:#da5480;"></div>
<div class="a" style="left:1468.6px;top:115.5px;width:14px;height:14px;background:#8ee0a2;"></div>
<div class="a" style="left:1484.2px;top:115.5px;width:14px;height:14px;background:#999999;"></div>
<div class="a" style="left:1499.7px;top:115.5px;width:14px;height:14px;background:#2a7340;"></div>
<div class="a" style="left:1515.3px;top:115.5px;width:14px;height:14px;background:#8a2a45;"></div>
<div class="a" style="left:1530.9px;top:115.5px;width:14px;height:14px;background:#6e6e6e;"></div>
<div class="a" style="left:1546.4px;top:115.5px;width:14px;height:14px;background:#d6d6d6;"></div>
<div class="a" style="left:1562.0px;top:115.5px;width:14px;height:14px;background:#ececec;"></div>
<div class="a" style="left:1577.6px;top:115.5px;width:14px;height:14px;background:#b8906e;"></div>
<div class="a" style="left:1353px;top:136.5px;width:245px;height:1px;background:#525252;"></div>
<div class="a" style="left:1353px;top:137.5px;width:230.5px;height:168.5px;background:#5d5d5d;"></div>
<div class="a" style="left:1353px;top:209.5px;width:230.5px;height:82.5px;background:#676767;"></div>
<div class="a" style="left:1583.5px;top:137.5px;width:14.5px;height:168.5px;background:#696969;"></div>
<div class="a" style="left:1586.3px;top:139.8px;width:8.8px;height:59.4px;background:#808080;border-radius:4.5px"></div>
<svg class="ic" style="left:1360.7px;top:147px" width="4" height="8" viewBox="0 0 4 8"><path d="M0.5 0.5 L3.5 4.0 L0.5 7.5" stroke="#dcdcdc" fill="none" stroke-width="1.2"/></svg>
<svg class="ic" style="left:1370.5px;top:146px" width="13" height="10" viewBox="0 0 13 10"><path d="M0.3 0.4 L4.8 0.4 L5.8 1.8 L12.6 1.8 L12.6 9.7 L0.3 9.7 Z" fill="#e0e0e0"/><path d="M0.3 2.6 L12.6 2.6" stroke="#676767" stroke-width="0.5"/></svg>
<div class="t" style="left:1390.5px;top:144.7px;font-size:10.5px;color:#e4e4e4;transform-origin:0 0;transform:scaleX(0.9093);">RGB</div>
<svg class="ic" style="left:1360.7px;top:172px" width="4" height="8" viewBox="0 0 4 8"><path d="M0.5 0.5 L3.5 4.0 L0.5 7.5" stroke="#dcdcdc" fill="none" stroke-width="1.2"/></svg>
<svg class="ic" style="left:1370.5px;top:171px" width="13" height="10" viewBox="0 0 13 10"><path d="M0.3 0.4 L4.8 0.4 L5.8 1.8 L12.6 1.8 L12.6 9.7 L0.3 9.7 Z" fill="#e0e0e0"/><path d="M0.3 2.6 L12.6 2.6" stroke="#676767" stroke-width="0.5"/></svg>
<div class="t" style="left:1390.5px;top:169.7px;font-size:10.5px;color:#e4e4e4;transform-origin:0 0;transform:scaleX(0.9656);">CMYK</div>
<svg class="ic" style="left:1360px;top:199.5px" width="7" height="4" viewBox="0 0 7 4"><path d="M0.5 0.5 L3.5 3.5 L6.5 0.5" stroke="#dcdcdc" fill="none" stroke-width="1.2"/></svg>
<svg class="ic" style="left:1370.5px;top:196px" width="13" height="10" viewBox="0 0 13 10"><path d="M0.5 9.6 L0.5 0.6 L4.6 0.6 L5.6 2 L12.4 2 L12.4 4" fill="none" stroke="#e0e0e0" stroke-width="1"/><path d="M0.5 9.6 L0.5 4 L12.6 4 L12.6 9.6 Z" fill="#e0e0e0"/></svg>
<div class="t" style="left:1390.5px;top:194.7px;font-size:10.5px;color:#e4e4e4;transform-origin:0 0;transform:scaleX(1.0050);">Grayscale</div>
<div class="a" style="left:1371.8px;top:214px;width:24.3px;height:24.3px;background:#ffffff;"></div>
<div class="a" style="left:1397.8px;top:214px;width:24.3px;height:24.3px;background:#ebebeb;"></div>
<div class="a" style="left:1423.9px;top:214px;width:24.3px;height:24.3px;background:#e8e8e8;"></div>
<div class="a" style="left:1450.0px;top:214px;width:24.3px;height:24.3px;background:#dedede;"></div>
<div class="a" style="left:1476.0px;top:214px;width:24.3px;height:24.3px;background:#d6d6d6;"></div>
<div class="a" style="left:1502.0px;top:214px;width:24.3px;height:24.3px;background:#cecece;"></div>
<div class="a" style="left:1528.1px;top:214px;width:24.3px;height:24.3px;background:#c6c6c6;"></div>
<div class="a" style="left:1554.1px;top:214px;width:24.3px;height:24.3px;background:#bcbcbc;"></div>
<div class="a" style="left:1371.8px;top:240px;width:24.3px;height:24.3px;background:#b0b0b0;"></div>
<div class="a" style="left:1397.8px;top:240px;width:24.3px;height:24.3px;background:#a6a6a6;"></div>
<div class="a" style="left:1423.9px;top:240px;width:24.3px;height:24.3px;background:#9a9a9a;"></div>
<div class="a" style="left:1450.0px;top:240px;width:24.3px;height:24.3px;background:#909090;"></div>
<div class="a" style="left:1476.0px;top:240px;width:24.3px;height:24.3px;background:#848484;"></div>
<div class="a" style="left:1502.0px;top:240px;width:24.3px;height:24.3px;background:#787878;"></div>
<div class="a" style="left:1528.1px;top:240px;width:24.3px;height:24.3px;background:#6c6c6c;"></div>
<div class="a" style="left:1554.1px;top:240px;width:24.3px;height:24.3px;background:#626262;"></div>
<div class="a" style="left:1371.8px;top:266px;width:24.3px;height:24.3px;background:#505050;"></div>
<div class="a" style="left:1397.8px;top:266px;width:24.3px;height:24.3px;background:#404040;"></div>
<div class="a" style="left:1423.9px;top:266px;width:24.3px;height:24.3px;background:#2e2e2e;"></div>
<div class="a" style="left:1450.0px;top:266px;width:24.3px;height:24.3px;background:#000000;"></div>
<div class="a" style="left:1353px;top:293px;width:230px;height:13px;overflow:hidden"><svg class="ic" style="left:8px;top:6.6px" width="4" height="8" viewBox="0 0 4 8"><path d="M0.5 0.5 L3.5 4.0 L0.5 7.5" stroke="#dcdcdc" fill="none" stroke-width="1.2"/></svg><svg class="ic" style="left:17.5px;top:6.6px" width="13" height="10" viewBox="0 0 13 10"><path d="M0.3 0.4 L4.8 0.4 L5.8 1.8 L12.6 1.8 L12.6 9.7 L0.3 9.7 Z" fill="#e0e0e0"/><path d="M0.3 2.6 L12.6 2.6" stroke="#676767" stroke-width="0.5"/></svg><div class="t" style="left:37.5px;top:5.5px;font-size:10.5px;color:#e4e4e4;transform-origin:0 0;transform:scaleX(0.9936);">Pastel</div></div>
<div class="a" style="left:1353px;top:306px;width:245px;height:21.5px;background:#696969;"></div>
<svg class="ic" style="left:1514px;top:312px" width="12" height="9" viewBox="0 0 12 9"><path d="M0.3 0.4 L4.4 0.4 L5.4 1.6 L11.6 1.6 L11.6 8.7 L0.3 8.7 Z" fill="#e0e0e0"/></svg>
<svg class="ic" style="left:1540px;top:312px" width="10" height="10" viewBox="0 0 10 10"><rect x="0.6" y="0.6" width="8.8" height="8.8" fill="none" stroke="#e0e0e0" stroke-width="1.1"/><path d="M5 2.8 L5 7.2 M2.8 5 L7.2 5" stroke="#e0e0e0" stroke-width="1.2"/></svg>
<svg class="ic" style="left:1565px;top:311.5px" width="9" height="11" viewBox="0 0 9 11"><path d="M0 2 L9 2 M3 2 L3 0.6 L6 0.6 L6 2" stroke="#999" stroke-width="1" fill="none"/><path d="M1 3 L8 3 L7.4 10.6 L1.6 10.6 Z" fill="none" stroke="#999" stroke-width="1"/><path d="M3.2 4.2 L3.2 9.4 M4.5 4.2 L4.5 9.4 M5.8 4.2 L5.8 9.4" stroke="#999" stroke-width="0.8"/></svg>
<div class="a" style="left:1353px;top:327.5px;width:245px;height:2.5px;background:#575757;"></div>
<!-- part_right2 -->
<div class="a" style="left:1353px;top:330px;width:245px;height:23.5px;background:#5c5c5c;"></div>
<div class="a" style="left:1353px;top:330px;width:61px;height:23.5px;background:#686868;"></div>
<div class="a" style="left:1486.5px;top:330px;width:1px;height:23.5px;background:#525252;"></div>
<div class="t b" style="left:1360.7px;top:336.9px;font-size:10px;color:#f4f4f4;transform-origin:0 0;transform:scaleX(0.9198);">Properties</div>
<div class="t b" style="left:1421.9px;top:336.9px;font-size:10px;color:#cfcfcf;transform-origin:0 0;transform:scaleX(0.9263);">Adjustments</div>
<svg class="ic" style="left:1584.5px;top:339px" width="10" height="7" viewBox="0 0 10 7"><path d="M0 0.7 L10 0.7 M0 3.3 L10 3.3 M0 5.9 L10 5.9" stroke="#d4d4d4" stroke-width="1.1"/></svg>
<div class="a" style="left:1353px;top:353.5px;width:245px;height:246.5px;background:#686868;"></div>
<div class="a" style="left:1583.5px;top:384px;width:14.5px;height:194px;background:#686868;"></div>
<div class="a" style="left:1588.3px;top:386.5px;width:8.7px;height:122.5px;background:#808080;border-radius:4.5px"></div>
<div class="a" style="left:1362.5px;top:359.7px;width:18.5px;height:18.5px;background:#4c4c4c;border-radius:1px"></div>
<svg class="ic" style="left:1365.5px;top:362.5px" width="13" height="13" viewBox="0 0 13 13"><rect x="2.2" y="2.2" width="8.6" height="8.6" fill="none" stroke="#ececec" stroke-width="1.3"/><rect x="0.8" y="0.8" width="2.8" height="2.8" rx="1" fill="#ececec"/><rect x="9.4" y="0.8" width="2.8" height="2.8" rx="1" fill="#ececec"/><rect x="0.8" y="9.4" width="2.8" height="2.8" rx="1" fill="#ececec"/><rect x="9.4" y="9.4" width="2.8" height="2.8" rx="1" fill="#ececec"/></svg>
<div class="a" style="left:1386px;top:364px;width:14.8px;height:11px;background:#f0f0f0;"></div>
<div class="a" style="left:1389.6px;top:366.4px;width:7.4px;height:6.2px;background:#4a4a4a;border-radius:50%"></div>
<div class="t" style="left:1406.6px;top:364.3px;font-size:10px;color:#e4e4e4;transform-origin:0 0;transform:scaleX(0.9217);">Live Shape Properties</div>
<div class="a" style="left:1353px;top:383.3px;width:245px;height:1px;background:#585858;"></div>
<svg class="ic" style="left:1359.3px;top:396px" width="7" height="4" viewBox="0 0 7 4"><path d="M0.5 0.5 L3.5 3.5 L6.5 0.5" stroke="#dcdcdc" fill="none" stroke-width="1.2"/></svg>
<div class="t b" style="left:1371.6px;top:392.1px;font-size:10px;color:#f0f0f0;transform-origin:0 0;transform:scaleX(0.9160);">Transform</div>
<svg class="ic" style="left:1513px;top:390px" width="13" height="12" viewBox="0 0 13 12"><path d="M3.6 5.2 A3.9 3.9 0 1 1 10 8.2" fill="none" stroke="#c4c4c4" stroke-width="1.3"/><path d="M0.4 5.4 L6.5 5.4 L3.2 8.5 Z" fill="#c4c4c4"/><path d="M1 10.7 L12 10.7" stroke="#c4c4c4" stroke-width="1"/></svg>
<div class="a" style="left:1361px;top:417.2px;width:20px;height:20.6px;background:#4c4c4c;border-radius:1px"></div>
<svg class="ic" style="left:1367.5px;top:420.5px" width="7" height="14" viewBox="0 0 7 14"><rect x="0.8" y="0.8" width="5.4" height="7" rx="2.7" fill="none" stroke="#ececec" stroke-width="1.4"/><rect x="0.8" y="6.2" width="5.4" height="7" rx="2.7" fill="none" stroke="#ececec" stroke-width="1.4"/><rect x="2.8" y="4" width="1.4" height="6" fill="#ececec"/></svg>
<div class="t" style="left:1389.4px;top:411.3px;font-size:10px;color:#e4e4e4;transform-origin:0 0;transform:scaleX(0.7934);">W</div>
<div class="inp" style="left:1402.3px;top:411.2px;width:53.2px;height:12.4px;border-radius:0;background:#565656;border-color:#787878"></div><div class="t" style="left:1405.0px;top:411.59999999999997px;font-size:10px;color:#f0f0f0;transform-origin:0 0;transform:scaleX(0.8876);">136.81 px</div>
<div class="t" style="left:1462.8px;top:411.3px;font-size:10px;color:#e4e4e4;transform-origin:0 0;transform:scaleX(0.8393);">X</div>
<div class="inp" style="left:1473.4px;top:411.2px;width:53px;height:12.4px;border-radius:0;background:#565656;border-color:#787878"></div><div class="t" style="left:1475.2px;top:411.59999999999997px;font-size:10px;color:#f0f0f0;transform-origin:0 0;transform:scaleX(0.9605);">434.59 px</div>
<div class="t" style="left:1390.9px;top:431.7px;font-size:10px;color:#e4e4e4;transform-origin:0 0;transform:scaleX(0.8294);">H</div>
<div class="inp" style="left:1402.3px;top:431.6px;width:53.2px;height:12.6px;border-radius:0;background:#565656;border-color:#787878"></div><div class="t" style="left:1405.0px;top:432.1px;font-size:10px;color:#f0f0f0;transform-origin:0 0;transform:scaleX(0.8850);">118.5 px</div>
<div class="t" style="left:1463.2px;top:431.7px;font-size:10px;color:#e4e4e4;transform-origin:0 0;transform:scaleX(0.7494);">Y</div>
<div class="inp" style="left:1473.4px;top:431.6px;width:53px;height:12.6px;border-radius:0;background:#565656;border-color:#787878"></div><div class="t" style="left:1475.2px;top:432.1px;font-size:10px;color:#f0f0f0;transform-origin:0 0;transform:scaleX(0.9623);">565 px</div>
<svg class="ic" style="left:1385.5px;top:457.5px" width="12" height="10" viewBox="0 0 12 10"><path d="M10.6 9 L0.8 9 L9 1.4" fill="none" stroke="#e0e0e0" stroke-width="1.1"/><path d="M5.4 4.8 A5.6 5.6 0 0 1 7.4 9" fill="none" stroke="#e0e0e0" stroke-width="0.9"/></svg>
<div class="inp" style="left:1402.3px;top:455px;width:50px;height:13.4px;border-radius:2px;background:#565656;border-color:#787878"></div>
<div class="a" style="left:1440px;top:456px;width:1px;height:11.4px;background:#787878;"></div>
<div class="t" style="left:1405px;top:456.8px;font-size:10px;color:#f0f0f0;transform-origin:0 0;transform:scaleX(0.9502);">0.00°</div>
<svg class="ic" style="left:1443px;top:460.5px" width="6.5" height="4" viewBox="0 0 6.5 4"><path d="M0.5 0.5 L3.25 3.5 L6.0 0.5" stroke="#dcdcdc" fill="none" stroke-width="1.2"/></svg>
<svg class="ic" style="left:1478px;top:456px" width="15" height="12" viewBox="0 0 15 12"><path d="M1 2 L1 10 L5 6 Z" fill="none" stroke="#e0e0e0" stroke-width="1"/><path d="M14 1.6 L14 10.4 L9.6 6 Z" fill="#e8e8e8"/><path d="M7.2 0 L7.2 12" stroke="#e0e0e0" stroke-width="0.9" stroke-dasharray="1.2 1"/></svg>
<svg class="ic" style="left:1509px;top:455.5px" width="12" height="14" viewBox="0 0 12 14"><path d="M2 1 L10 1 L6 5 Z" fill="none" stroke="#e0e0e0" stroke-width="1"/><path d="M1.6 13 L10.4 13 L6 8.6 Z" fill="#e8e8e8"/><path d="M0 6.8 L12 6.8" stroke="#e0e0e0" stroke-width="0.9" stroke-dasharray="1.2 1"/></svg>
<div class="a" style="left:1353px;top:482.3px;width:229px;height:1px;background:#585858;"></div>
<svg class="ic" style="left:1359.3px;top:495.5px" width="7" height="4" viewBox="0 0 7 4"><path d="M0.5 0.5 L3.5 3.5 L6.5 0.5" stroke="#dcdcdc" fill="none" stroke-width="1.2"/></svg>
<div class="t b" style="left:1371.4px;top:491.2px;font-size:10px;color:#f0f0f0;transform-origin:0 0;transform:scaleX(0.9170);">Appearance</div>
<div class="t" style="left:1386px;top:515.1px;font-size:10px;color:#e4e4e4;transform-origin:0 0;transform:scaleX(0.8919);">Fill</div>
<div class="a" style="left:1402.5px;top:512.7px;width:25px;height:15.6px;background:transparent;border:1px solid #808080"></div>
<div class="a" style="left:1404.5px;top:514.7px;width:21px;height:11.6px;background:#3fa9e6;"></div>
<div class="t" style="left:1371.9px;top:538.8px;font-size:10px;color:#e4e4e4;transform-origin:0 0;transform:scaleX(0.8822);">Stroke</div>
<div class="a" style="left:1402.5px;top:536.4px;width:25px;height:15.8px;background:transparent;border:1px solid #808080"></div>
<div class="a" style="left:1404.5px;top:538.4px;width:21px;height:11.8px;background:#ffffff;"></div>
<svg class="ic" style="left:1404.5px;top:538.4px" width="21" height="12" viewBox="0 0 21 12"><rect x="4.5" y="4" width="12" height="3.6" fill="#777" stroke="#444" stroke-width="1"/><path d="M14 2.2 L17 0.6 M4 11.2 L7 9.6" stroke="#c0392b" stroke-width="1.2"/></svg>
<div class="inp" style="left:1402.3px;top:561.2px;width:56px;height:13.6px;border-radius:2px;background:#565656;border-color:#787878"></div>
<div class="a" style="left:1446.6px;top:562.2px;width:1px;height:11.6px;background:#787878;"></div>
<div class="t" style="left:1405.5px;top:562.9px;font-size:10px;color:#f0f0f0;transform-origin:0 0;transform:scaleX(0.8198);">1 px</div>
<svg class="ic" style="left:1449.5px;top:567px" width="6.5" height="4" viewBox="0 0 6.5 4"><path d="M0.5 0.5 L3.25 3.5 L6.0 0.5" stroke="#dcdcdc" fill="none" stroke-width="1.2"/></svg>
<div class="inp" style="left:1464px;top:561.2px;width:61px;height:13.6px;border-radius:3px;background:#5c5c5c;border-color:#747474"></div>
<div class="a" style="left:1468px;top:567.2px;width:44px;height:1.8px;background:#f2f2f2;"></div>
<svg class="ic" style="left:1516.5px;top:567px" width="6.5" height="4" viewBox="0 0 6.5 4"><path d="M0.5 0.5 L3.25 3.5 L6.0 0.5" stroke="#dcdcdc" fill="none" stroke-width="1.2"/></svg>
<div class="a" style="left:1353px;top:600px;width:245px;height:3px;background:#575757;"></div>
<!-- part_right3 -->
<svg width="0" height="0" style="position:absolute"><defs><pattern id="chk" width="6.6" height="6.6" patternUnits="userSpaceOnUse"><rect width="3.3" height="3.3" fill="#c8c8c8"/><rect x="3.3" y="3.3" width="3.3" height="3.3" fill="#c8c8c8"/></pattern></defs></svg>
<div class="a" style="left:1353px;top:603px;width:245px;height:23.3px;background:#5c5c5c;"></div>
<div class="a" style="left:1353px;top:603px;width:45.2px;height:23.3px;background:#686868;"></div>
<div class="a" style="left:1454.5px;top:603px;width:1px;height:23.3px;background:#525252;"></div>
<div class="a" style="left:1494.5px;top:603.5px;width:1px;height:22.5px;background:transparent;border-left:1px dotted #4a4a4a"></div>
<div class="t b" style="left:1360.5px;top:609.2px;font-size:10px;color:#f4f4f4;transform-origin:0 0;transform:scaleX(0.8930);">Layers</div>
<div class="t b" style="left:1405.6px;top:609.2px;font-size:10px;color:#cfcfcf;transform-origin:0 0;transform:scaleX(0.9086);">Channels</div>
<div class="t b" style="left:1462.6px;top:609.2px;font-size:10px;color:#cfcfcf;transform-origin:0 0;transform:scaleX(0.8776);">Paths</div>
<svg class="ic" style="left:1584.5px;top:610.7px" width="10" height="7" viewBox="0 0 10 7"><path d="M0 0.7 L10 0.7 M0 3.3 L10 3.3 M0 5.9 L10 5.9" stroke="#d4d4d4" stroke-width="1.1"/></svg>
<div class="a" style="left:1353px;top:626.3px;width:245px;height:339.2px;background:#686868;"></div>
<div class="a" style="left:1353px;top:965.5px;width:245px;height:2.5px;background:#4c4c4c;"></div>
<div class="a" style="left:1357px;top:636.6px;width:74.2px;height:12.3px;background:#595959;border-radius:2px"></div>
<svg class="ic" style="left:1363px;top:638.8px" width="9" height="9" viewBox="0 0 9 9"><circle cx="3.6" cy="3.6" r="2.7" fill="none" stroke="#f0f0f0" stroke-width="1.4"/><path d="M5.6 5.6 L8.4 8.4" stroke="#f0f0f0" stroke-width="1.6"/></svg>
<div class="t" style="left:1374.7px;top:636.8px;font-size:10px;color:#e4e4e4;transform-origin:0 0;transform:scaleX(0.8893);">Kind</div>
<svg class="ic" style="left:1422.5px;top:641.5px" width="6.5" height="4" viewBox="0 0 6.5 4"><path d="M0.5 0.5 L3.25 3.5 L6.0 0.5" stroke="#dcdcdc" fill="none" stroke-width="1.2"/></svg>
<svg class="ic" style="left:1442px;top:638px" width="11" height="9.5" viewBox="0 0 11 9.5"><rect x="0.6" y="0.6" width="9.8" height="8.2" fill="none" stroke="#e6e6e6" stroke-width="1.1"/><path d="M2 7.4 L4.2 4.2 L5.8 6.2 L7.2 4.8 L9 7.4 Z" fill="#e6e6e6"/></svg>
<svg class="ic" style="left:1463px;top:638px" width="10.4" height="10.4" viewBox="0 0 10.4 10.4"><circle cx="5.2" cy="5.2" r="4.5" fill="none" stroke="#e6e6e6" stroke-width="1.2"/><path d="M2 8.4 A4.5 4.5 0 0 1 8.4 2 Z" fill="#e6e6e6"/></svg>
<svg class="ic" style="left:1484.5px;top:638.4px" width="9.4" height="9" viewBox="0 0 9.4 9"><path d="M0.2 0.2 L9.2 0.2 L9.2 2.6 L8.4 2.6 L8 1.4 L5.6 1.4 L5.6 7.6 L7 8 L7 8.8 L2.4 8.8 L2.4 8 L3.8 7.6 L3.8 1.4 L1.4 1.4 L1 2.6 L0.2 2.6 Z" fill="#e6e6e6"/></svg>
<svg class="ic" style="left:1504.5px;top:638px" width="10.4" height="10.4" viewBox="0 0 10.4 10.4"><rect x="1.8" y="1.8" width="6.8" height="6.8" fill="none" stroke="#e6e6e6" stroke-width="1.2"/><rect x="0.4" y="0.4" width="2.6" height="2.6" fill="#e6e6e6"/><rect x="7.4" y="0.4" width="2.6" height="2.6" fill="#e6e6e6"/><rect x="0.4" y="7.4" width="2.6" height="2.6" fill="#e6e6e6"/><rect x="7.4" y="7.4" width="2.6" height="2.6" fill="#e6e6e6"/></svg>
<svg class="ic" style="left:1526px;top:637.6px" width="10" height="11" viewBox="0 0 10 11"><path d="M2.6 4.4 L2.6 0.6 L6.6 0.6 L9.2 3.2 L9.2 9.8 L6.4 9.8" fill="none" stroke="#e6e6e6" stroke-width="1.1"/><rect x="0.3" y="5.2" width="5.6" height="5.4" fill="#e6e6e6"/></svg>
<div class="a" style="left:1546.6px;top:636px;width:6.6px;height:13px;background:#5f5f5f;border-radius:3.3px;border:0.6px solid #565656"></div>
<div class="a" style="left:1546px;top:634.3px;width:7.6px;height:7.6px;background:#f0f0f0;border-radius:50%"></div>
<div class="a" style="left:1353px;top:653px;width:245px;height:1px;background:#5a5a5a;"></div>
<div class="a" style="left:1357px;top:659.2px;width:111.6px;height:14px;background:#595959;border-radius:2px"></div>
<div class="t" style="left:1362.5px;top:661.2px;font-size:10px;color:#e4e4e4;transform-origin:0 0;transform:scaleX(0.9214);">Normal</div>
<svg class="ic" style="left:1460px;top:665px" width="6.5" height="4" viewBox="0 0 6.5 4"><path d="M0.5 0.5 L3.25 3.5 L6.0 0.5" stroke="#dcdcdc" fill="none" stroke-width="1.2"/></svg>
<div class="t" style="left:1472.7px;top:661px;font-size:10px;color:#e4e4e4;transform-origin:0 0;transform:scaleX(0.9158);">Opacity:</div>
<div class="inp" style="left:1508.6px;top:658.8px;width:43.7px;height:13.8px;border-radius:2px;background:#565656;border-color:#787878"></div>
<div class="a" style="left:1540px;top:659.8px;width:1px;height:11.8px;background:#787878;"></div>
<div class="t" style="left:1512.5px;top:660.9px;font-size:10px;color:#f0f0f0;transform-origin:0 0;transform:scaleX(0.8743);">82%</div>
<svg class="ic" style="left:1543.5px;top:664.5px" width="6.5" height="4" viewBox="0 0 6.5 4"><path d="M0.5 0.5 L3.25 3.5 L6.0 0.5" stroke="#dcdcdc" fill="none" stroke-width="1.2"/></svg>
<div class="a" style="left:1353px;top:677.3px;width:245px;height:1px;background:#5a5a5a;"></div>
<div class="t" style="left:1357.5px;top:685.1px;font-size:10px;color:#e4e4e4;transform-origin:0 0;transform:scaleX(0.9077);">Lock:</div>
<svg class="ic" style="left:1384.7px;top:685px" width="10.2" height="10" viewBox="0 0 10.2 10"><rect width="10.2" height="10" fill="#8a8a8a"/><rect x="0" y="0" width="3.4" height="3.3" fill="#b0b0b0"/><rect x="6.8" y="0" width="3.4" height="3.3" fill="#b0b0b0"/><rect x="3.4" y="3.3" width="3.4" height="3.4" fill="#b0b0b0"/><rect x="0" y="6.7" width="3.4" height="3.3" fill="#b0b0b0"/><rect x="6.8" y="6.7" width="3.4" height="3.3" fill="#b0b0b0"/></svg>
<svg class="ic" style="left:1403px;top:685.5px" width="11" height="11.5" viewBox="0 0 11 11.5"><path d="M9.4 0.2 L10.9 1.4 L5.8 7.8 L3.7 6.2 Z" fill="#9a9a9a"/><path d="M3 6.8 L5.2 8.5 C4.8 11 2.2 11.6 0.1 11.1 C1.6 10 1 7.6 3 6.8 Z" fill="#9a9a9a"/></svg>
<svg class="ic" style="left:1422px;top:684.5px" width="11.6" height="11.6" viewBox="0 0 11.6 11.6"><path d="M5.8 0 L7.8 2.4 L6.4 2.4 L6.4 5.2 L9.2 5.2 L9.2 3.8 L11.6 5.8 L9.2 7.8 L9.2 6.4 L6.4 6.4 L6.4 9.2 L7.8 9.2 L5.8 11.6 L3.8 9.2 L5.2 9.2 L5.2 6.4 L2.4 6.4 L2.4 7.8 L0 5.8 L2.4 3.8 L2.4 5.2 L5.2 5.2 L5.2 2.4 L3.8 2.4 Z" fill="#e6e6e6"/></svg>
<svg class="ic" style="left:1441px;top:685.5px" width="12" height="11.5" viewBox="0 0 12 11.5"><path d="M2.8 0 L2.8 11.5 M9 0.6 L9 2.2 M9 4 L9 11.5 M0 2.8 L12 2.8 M0 9 L12 9" fill="none" stroke="#e6e6e6" stroke-width="1.1"/><path d="M6 0.6 L11.4 0.6 L11.4 5.4" fill="none" stroke="#e6e6e6" stroke-width="0.9" stroke-dasharray="1.4 1"/></svg>
<svg class="ic" style="left:1461px;top:685.3px" width="10" height="11" viewBox="0 0 10 11"><path d="M2.6 5 L2.6 3.2 A2.4 2.4 0 0 1 7.4 3.2 L7.4 5" fill="none" stroke="#e6e6e6" stroke-width="1.4"/><rect x="0.4" y="4.8" width="9.2" height="6" rx="0.8" fill="#e6e6e6"/><rect x="4.2" y="6.6" width="1.6" height="2.4" fill="#555"/></svg>
<div class="t" style="left:1493px;top:685.1px;font-size:10px;color:#e4e4e4;transform-origin:0 0;transform:scaleX(0.8803);">Fill:</div>
<div class="inp" style="left:1508.6px;top:683px;width:43.7px;height:13.8px;border-radius:2px;background:#565656;border-color:#787878"></div>
<div class="a" style="left:1540px;top:684px;width:1px;height:11.8px;background:#787878;"></div>
<div class="t" style="left:1512.5px;top:685.1px;font-size:10px;color:#f0f0f0;transform-origin:0 0;transform:scaleX(0.8601);">100%</div>
<svg class="ic" style="left:1543.5px;top:688.7px" width="6.5" height="4" viewBox="0 0 6.5 4"><path d="M0.5 0.5 L3.25 3.5 L6.0 0.5" stroke="#dcdcdc" fill="none" stroke-width="1.2"/></svg>
<div class="a" style="left:1353px;top:703.3px;width:232.5px;height:241.7px;background:#686868;"></div>
<div class="a" style="left:1585.5px;top:703.3px;width:12.5px;height:241.7px;background:#686868;"></div>
<div class="a" style="left:1588.3px;top:706.3px;width:8.3px;height:181px;background:#828282;border-radius:4.2px"></div>
<div class="a" style="left:0;top:0;width:1600px;height:945px;overflow:hidden;pointer-events:none"><div class="a" style="left:1379.7px;top:704.5px;width:205.8px;height:27.4px;background:#838383;"></div>
<div class="a" style="left:1353px;top:703.3px;width:232.5px;height:1px;background:#555555;"></div>
<svg class="ic" style="left:1360.5px;top:715.0999999999999px" width="12" height="7.6" viewBox="0 0 12 7.6"><path d="M0.4 4 C2.4 0.6 9.6 0.6 11.6 4 C9.6 7.4 2.4 7.4 0.4 4 Z" fill="#f0f0f0"/><circle cx="6" cy="4" r="2.5" fill="#5a5a5a"/><circle cx="6.6" cy="3.4" r="1" fill="#9a9a9a"/></svg>
<svg class="ic" style="left:1382.6px;top:708.8px" width="27" height="20.4" viewBox="0 0 27 20.4"><rect x="0" y="0" width="27" height="20.4" fill="#fff"/><rect x="0" y="0" width="27" height="20.4" fill="url(#chk)"/><rect x="15" y="8.8" width="12" height="11.6" fill="#555"/><rect x="17.8" y="11.4" width="6.8" height="6.6" fill="none" stroke="#f0f0f0" stroke-width="1.1"/><rect x="16.7" y="10.3" width="2.2" height="2.2" fill="#f0f0f0"/><rect x="23.5" y="10.3" width="2.2" height="2.2" fill="#f0f0f0"/><rect x="16.7" y="16.9" width="2.2" height="2.2" fill="#f0f0f0"/><rect x="23.5" y="16.9" width="2.2" height="2.2" fill="#f0f0f0"/><rect x="0.4" y="0.4" width="26.2" height="19.6" fill="none" stroke="#3c3c3c" stroke-width="0.9"/><path d="M-2.3 6.6 L-2.3 -1.8 L8.2 -1.8 M18.6 -1.8 L29.2 -1.8 L29.2 6.6 M29.2 14.8 L29.2 22.2 L18.6 22.2 M8.2 22.2 L-2.3 22.2 L-2.3 14.8" fill="none" stroke="#f4f4f4" stroke-width="1.5"/></svg>
<div class="t" style="left:1417.4px;top:713.4px;font-size:10px;color:#f0f0f0;transform-origin:0 0;transform:scaleX(0.8864);">Triangle 1</div>
<div class="a" style="left:1353px;top:731.95px;width:232.5px;height:1px;background:#555555;"></div>
<svg class="ic" style="left:1360.5px;top:743.75px" width="12" height="7.6" viewBox="0 0 12 7.6"><path d="M0.4 4 C2.4 0.6 9.6 0.6 11.6 4 C9.6 7.4 2.4 7.4 0.4 4 Z" fill="#f0f0f0"/><circle cx="6" cy="4" r="2.5" fill="#5a5a5a"/><circle cx="6.6" cy="3.4" r="1" fill="#9a9a9a"/></svg>
<svg class="ic" style="left:1382.6px;top:737.45px" width="27" height="20.4" viewBox="0 0 27 20.4"><rect x="0" y="0" width="27" height="20.4" fill="#fff"/><rect x="0" y="0" width="27" height="20.4" fill="url(#chk)"/><rect x="15" y="8.8" width="12" height="11.6" fill="#555"/><rect x="17.8" y="11.4" width="6.8" height="6.6" fill="none" stroke="#f0f0f0" stroke-width="1.1"/><rect x="16.7" y="10.3" width="2.2" height="2.2" fill="#f0f0f0"/><rect x="23.5" y="10.3" width="2.2" height="2.2" fill="#f0f0f0"/><rect x="16.7" y="16.9" width="2.2" height="2.2" fill="#f0f0f0"/><rect x="23.5" y="16.9" width="2.2" height="2.2" fill="#f0f0f0"/><rect x="0.4" y="0.4" width="26.2" height="19.6" fill="none" stroke="#3c3c3c" stroke-width="0.9"/></svg>
<div class="t" style="left:1417.4px;top:742.0500000000001px;font-size:10px;color:#f0f0f0;transform-origin:0 0;transform:scaleX(0.9059);">Triangle 1 copy</div>
<div class="a" style="left:1353px;top:760.6px;width:232.5px;height:1px;background:#555555;"></div>
<svg class="ic" style="left:1360.5px;top:772.4px" width="12" height="7.6" viewBox="0 0 12 7.6"><path d="M0.4 4 C2.4 0.6 9.6 0.6 11.6 4 C9.6 7.4 2.4 7.4 0.4 4 Z" fill="#f0f0f0"/><circle cx="6" cy="4" r="2.5" fill="#5a5a5a"/><circle cx="6.6" cy="3.4" r="1" fill="#9a9a9a"/></svg>
<svg class="ic" style="left:1382.6px;top:766.1px" width="27" height="20.4" viewBox="0 0 27 20.4"><rect x="0" y="0" width="27" height="20.4" fill="#fff"/><rect x="0" y="0" width="27" height="20.4" fill="url(#chk)"/><rect x="15" y="8.8" width="12" height="11.6" fill="#555"/><rect x="17.8" y="11.4" width="6.8" height="6.6" fill="none" stroke="#f0f0f0" stroke-width="1.1"/><rect x="16.7" y="10.3" width="2.2" height="2.2" fill="#f0f0f0"/><rect x="23.5" y="10.3" width="2.2" height="2.2" fill="#f0f0f0"/><rect x="16.7" y="16.9" width="2.2" height="2.2" fill="#f0f0f0"/><rect x="23.5" y="16.9" width="2.2" height="2.2" fill="#f0f0f0"/><rect x="0.4" y="0.4" width="26.2" height="19.6" fill="none" stroke="#3c3c3c" stroke-width="0.9"/></svg>
<div class="t" style="left:1417.4px;top:770.7px;font-size:10px;color:#f0f0f0;transform-origin:0 0;transform:scaleX(0.9051);">Triangle 1 copy 2</div>
<div class="a" style="left:1353px;top:789.25px;width:232.5px;height:1px;background:#555555;"></div>
<svg class="ic" style="left:1360.5px;top:801.05px" width="12" height="7.6" viewBox="0 0 12 7.6"><path d="M0.4 4 C2.4 0.6 9.6 0.6 11.6 4 C9.6 7.4 2.4 7.4 0.4 4 Z" fill="#f0f0f0"/><circle cx="6" cy="4" r="2.5" fill="#5a5a5a"/><circle cx="6.6" cy="3.4" r="1" fill="#9a9a9a"/></svg>
<svg class="ic" style="left:1382.6px;top:794.75px" width="27" height="20.4" viewBox="0 0 27 20.4"><rect x="0" y="0" width="27" height="20.4" fill="#fff"/><rect x="0" y="0" width="27" height="20.4" fill="url(#chk)"/><rect x="15" y="8.8" width="12" height="11.6" fill="#555"/><rect x="17.8" y="11.4" width="6.8" height="6.6" fill="none" stroke="#f0f0f0" stroke-width="1.1"/><rect x="16.7" y="10.3" width="2.2" height="2.2" fill="#f0f0f0"/><rect x="23.5" y="10.3" width="2.2" height="2.2" fill="#f0f0f0"/><rect x="16.7" y="16.9" width="2.2" height="2.2" fill="#f0f0f0"/><rect x="23.5" y="16.9" width="2.2" height="2.2" fill="#f0f0f0"/><rect x="0.4" y="0.4" width="26.2" height="19.6" fill="none" stroke="#3c3c3c" stroke-width="0.9"/></svg>
<div class="t" style="left:1417.4px;top:799.35px;font-size:10px;color:#f0f0f0;transform-origin:0 0;transform:scaleX(0.9156);">Triangle 1 copy 3</div>
<div class="a" style="left:1353px;top:817.9px;width:232.5px;height:1px;background:#555555;"></div>
<svg class="ic" style="left:1360.5px;top:829.6999999999999px" width="12" height="7.6" viewBox="0 0 12 7.6"><path d="M0.4 4 C2.4 0.6 9.6 0.6 11.6 4 C9.6 7.4 2.4 7.4 0.4 4 Z" fill="#f0f0f0"/><circle cx="6" cy="4" r="2.5" fill="#5a5a5a"/><circle cx="6.6" cy="3.4" r="1" fill="#9a9a9a"/></svg>
<svg class="ic" style="left:1382.6px;top:823.4px" width="27" height="20.4" viewBox="0 0 27 20.4"><rect x="0" y="0" width="27" height="20.4" fill="#fff"/><rect x="0" y="0" width="27" height="20.4" fill="url(#chk)"/><path d="M3.2 4.6 L7.4 4.2 L9.6 7.4 L6.6 9.2 L4.2 8 Z" fill="#9a3c9c"/><rect x="15" y="8.8" width="12" height="11.6" fill="#555"/><rect x="17.8" y="11.4" width="6.8" height="6.6" fill="none" stroke="#f0f0f0" stroke-width="1.1"/><rect x="16.7" y="10.3" width="2.2" height="2.2" fill="#f0f0f0"/><rect x="23.5" y="10.3" width="2.2" height="2.2" fill="#f0f0f0"/><rect x="16.7" y="16.9" width="2.2" height="2.2" fill="#f0f0f0"/><rect x="23.5" y="16.9" width="2.2" height="2.2" fill="#f0f0f0"/><rect x="0.4" y="0.4" width="26.2" height="19.6" fill="none" stroke="#3c3c3c" stroke-width="0.9"/></svg>
<div class="t" style="left:1417.4px;top:828.0px;font-size:10px;color:#f0f0f0;transform-origin:0 0;transform:scaleX(0.8974);">Rectangle 1</div>
<div class="a" style="left:1353px;top:846.55px;width:232.5px;height:1px;background:#555555;"></div>
<svg class="ic" style="left:1360.5px;top:858.3499999999999px" width="12" height="7.6" viewBox="0 0 12 7.6"><path d="M0.4 4 C2.4 0.6 9.6 0.6 11.6 4 C9.6 7.4 2.4 7.4 0.4 4 Z" fill="#f0f0f0"/><circle cx="6" cy="4" r="2.5" fill="#5a5a5a"/><circle cx="6.6" cy="3.4" r="1" fill="#9a9a9a"/></svg>
<svg class="ic" style="left:1382.6px;top:852.05px" width="27" height="20.4" viewBox="0 0 27 20.4"><rect x="0" y="0" width="27" height="20.4" fill="#fff"/><rect x="0" y="0" width="27" height="20.4" fill="url(#chk)"/><path d="M5.4 4 L9 5 L8.2 8.4 L4.6 9.4 L3.8 6.4 Z" fill="#9a3c9c"/><rect x="15" y="8.8" width="12" height="11.6" fill="#555"/><rect x="17.8" y="11.4" width="6.8" height="6.6" fill="none" stroke="#f0f0f0" stroke-width="1.1"/><rect x="16.7" y="10.3" width="2.2" height="2.2" fill="#f0f0f0"/><rect x="23.5" y="10.3" width="2.2" height="2.2" fill="#f0f0f0"/><rect x="16.7" y="16.9" width="2.2" height="2.2" fill="#f0f0f0"/><rect x="23.5" y="16.9" width="2.2" height="2.2" fill="#f0f0f0"/><rect x="0.4" y="0.4" width="26.2" height="19.6" fill="none" stroke="#3c3c3c" stroke-width="0.9"/></svg>
<div class="t" style="left:1417.4px;top:856.65px;font-size:10px;color:#f0f0f0;transform-origin:0 0;transform:scaleX(0.9148);">Rectangle 1 copy</div>
<div class="a" style="left:1353px;top:875.2px;width:232.5px;height:1px;background:#555555;"></div>
<svg class="ic" style="left:1360.5px;top:887.0px" width="12" height="7.6" viewBox="0 0 12 7.6"><path d="M0.4 4 C2.4 0.6 9.6 0.6 11.6 4 C9.6 7.4 2.4 7.4 0.4 4 Z" fill="#f0f0f0"/><circle cx="6" cy="4" r="2.5" fill="#5a5a5a"/><circle cx="6.6" cy="3.4" r="1" fill="#9a9a9a"/></svg>
<svg class="ic" style="left:1382.6px;top:880.7px" width="27" height="20.4" viewBox="0 0 27 20.4"><rect x="0" y="0" width="27" height="20.4" fill="#fff"/><rect x="0" y="0" width="27" height="20.4" fill="url(#chk)"/><path d="M4.6 4.4 L8.4 4.2 L9.6 6.8 L7.4 9.2 L4 8.6 L3.2 6.4 Z" fill="#9a3c9c"/><rect x="15" y="8.8" width="12" height="11.6" fill="#555"/><rect x="17.8" y="11.4" width="6.8" height="6.6" fill="none" stroke="#f0f0f0" stroke-width="1.1"/><rect x="16.7" y="10.3" width="2.2" height="2.2" fill="#f0f0f0"/><rect x="23.5" y="10.3" width="2.2" height="2.2" fill="#f0f0f0"/><rect x="16.7" y="16.9" width="2.2" height="2.2" fill="#f0f0f0"/><rect x="23.5" y="16.9" width="2.2" height="2.2" fill="#f0f0f0"/><rect x="0.4" y="0.4" width="26.2" height="19.6" fill="none" stroke="#3c3c3c" stroke-width="0.9"/></svg>
<div class="t" style="left:1417.4px;top:885.3000000000001px;font-size:10px;color:#f0f0f0;transform-origin:0 0;transform:scaleX(0.9109);">Rectangle 1 copy 2</div>
<div class="a" style="left:1353px;top:903.85px;width:232.5px;height:1px;background:#555555;"></div>
<svg class="ic" style="left:1360.5px;top:915.65px" width="12" height="7.6" viewBox="0 0 12 7.6"><path d="M0.4 4 C2.4 0.6 9.6 0.6 11.6 4 C9.6 7.4 2.4 7.4 0.4 4 Z" fill="#f0f0f0"/><circle cx="6" cy="4" r="2.5" fill="#5a5a5a"/><circle cx="6.6" cy="3.4" r="1" fill="#9a9a9a"/></svg>
<svg class="ic" style="left:1382.6px;top:909.35px" width="27" height="20.4" viewBox="0 0 27 20.4"><rect x="0" y="0" width="27" height="20.4" fill="#fff"/><rect x="0" y="0" width="27" height="20.4" fill="url(#chk)"/><path d="M6 3.8 L8.8 5.4 L7.6 9 L4.6 9.4 L3.8 6.6 Z" fill="#9a3c9c"/><rect x="15" y="8.8" width="12" height="11.6" fill="#555"/><rect x="17.8" y="11.4" width="6.8" height="6.6" fill="none" stroke="#f0f0f0" stroke-width="1.1"/><rect x="16.7" y="10.3" width="2.2" height="2.2" fill="#f0f0f0"/><rect x="23.5" y="10.3" width="2.2" height="2.2" fill="#f0f0f0"/><rect x="16.7" y="16.9" width="2.2" height="2.2" fill="#f0f0f0"/><rect x="23.5" y="16.9" width="2.2" height="2.2" fill="#f0f0f0"/><rect x="0.4" y="0.4" width="26.2" height="19.6" fill="none" stroke="#3c3c3c" stroke-width="0.9"/></svg>
<div class="t" style="left:1417.4px;top:913.95px;font-size:10px;color:#f0f0f0;transform-origin:0 0;transform:scaleX(0.9109);">Rectangle 1 copy 3</div>
<div class="a" style="left:1353px;top:932.5px;width:232.5px;height:1px;background:#555555;"></div>
<svg class="ic" style="left:1360.5px;top:944.3px" width="12" height="7.6" viewBox="0 0 12 7.6"><path d="M0.4 4 C2.4 0.6 9.6 0.6 11.6 4 C9.6 7.4 2.4 7.4 0.4 4 Z" fill="#f0f0f0"/><circle cx="6" cy="4" r="2.5" fill="#5a5a5a"/><circle cx="6.6" cy="3.4" r="1" fill="#9a9a9a"/></svg>
<svg class="ic" style="left:1382.6px;top:938.0px" width="27" height="20.4" viewBox="0 0 27 20.4"><rect x="0" y="0" width="27" height="20.4" fill="#fff"/><rect x="0" y="0" width="27" height="20.4" fill="url(#chk)"/><path d="M6.4 5 L9 6.4 L6 9.6 L4 8.4 Z" fill="#9a3c9c"/><rect x="15" y="8.8" width="12" height="11.6" fill="#555"/><rect x="17.8" y="11.4" width="6.8" height="6.6" fill="none" stroke="#f0f0f0" stroke-width="1.1"/><rect x="16.7" y="10.3" width="2.2" height="2.2" fill="#f0f0f0"/><rect x="23.5" y="10.3" width="2.2" height="2.2" fill="#f0f0f0"/><rect x="16.7" y="16.9" width="2.2" height="2.2" fill="#f0f0f0"/><rect x="23.5" y="16.9" width="2.2" height="2.2" fill="#f0f0f0"/><rect x="0.4" y="0.4" width="26.2" height="19.6" fill="none" stroke="#3c3c3c" stroke-width="0.9"/></svg>
<div class="t" style="left:1417.4px;top:942.6px;font-size:10px;color:#f0f0f0;transform-origin:0 0;transform:scaleX(0.9109);">Rectangle 1 copy 4</div></div>
<div class="a" style="left:1379.5px;top:703.3px;width:1px;height:241.7px;background:#555555;"></div>
<div class="a" style="left:1353px;top:945px;width:245px;height:20.5px;background:#686868;"></div>
<svg class="ic" style="left:1424px;top:952.5px" width="12" height="7" viewBox="0 0 12 7"><rect x="0.6" y="0.6" width="6" height="5.4" rx="2.7" fill="none" stroke="#8e8e8e" stroke-width="1.2"/><rect x="5.4" y="0.6" width="6" height="5.4" rx="2.7" fill="none" stroke="#8e8e8e" stroke-width="1.2"/><rect x="3.4" y="2.7" width="5.2" height="1.2" fill="#8e8e8e"/></svg>
<div class="t" style="left:1447.5px;top:949.6px;font-size:12.5px;color:#e6e6e6;transform-origin:0 0;transform:scaleX(1.0787);font-style:italic;font-family:"Liberation Serif",serif;line-height:14px;height:14px;">fx</div>
<svg class="ic" style="left:1456.5px;top:960.6px" width="4" height="3" viewBox="0 0 4 3"><path d="M0 0.4 L3.4 0.4 L1.7 2.4 Z" fill="#e6e6e6"/></svg>
<svg class="ic" style="left:1470px;top:951px" width="12.4" height="9.4" viewBox="0 0 12.4 9.4"><rect width="12.4" height="9.4" fill="#e6e6e6"/><circle cx="6.2" cy="4.7" r="2.9" fill="#555"/></svg>
<svg class="ic" style="left:1494.6px;top:950.6px" width="13" height="13" viewBox="0 0 13 13"><circle cx="5.2" cy="5.2" r="4.5" fill="none" stroke="#e6e6e6" stroke-width="1.2"/><path d="M2 8.4 A4.5 4.5 0 0 1 8.4 2 Z" fill="#e6e6e6"/><path d="M9.4 10.4 L12.6 10.4 L11 12.2 Z" fill="#e6e6e6"/></svg>
<svg class="ic" style="left:1517.5px;top:951px" width="11.4" height="9" viewBox="0 0 11.4 9"><path d="M0.2 0.4 L4.2 0.4 L5.2 1.6 L11.2 1.6 L11.2 8.8 L0.2 8.8 Z" fill="#e6e6e6"/></svg>
<svg class="ic" style="left:1541.5px;top:950.6px" width="10.6" height="10.6" viewBox="0 0 10.6 10.6"><rect x="0.6" y="0.6" width="9.4" height="9.4" fill="none" stroke="#e6e6e6" stroke-width="1.1"/><path d="M5.3 3 L5.3 7.6 M3 5.3 L7.6 5.3" stroke="#e6e6e6" stroke-width="1.2"/></svg>
<svg class="ic" style="left:1564.5px;top:950px" width="9.4" height="11.4" viewBox="0 0 9.4 11.4"><path d="M0 2 L9.4 2 M3.2 2 L3.2 0.6 L6.2 0.6 L6.2 2" stroke="#e6e6e6" stroke-width="1" fill="none"/><path d="M1 3 L8.4 3 L7.8 11 L1.6 11 Z" fill="none" stroke="#e6e6e6" stroke-width="1"/><path d="M3.3 4.4 L3.3 9.8 M4.7 4.4 L4.7 9.8 M6.1 4.4 L6.1 9.8" stroke="#e6e6e6" stroke-width="0.8"/></svg>
<div class="a" style="left:1302px;top:952.5px;width:13.5px;height:13.5px;background:#686868;"></div>
<div class="a" style="left:0px;top:966px;width:250px;height:2px;background:#383838;"></div>
<div class="a" style="left:250px;top:966.4px;width:1350px;height:1.6px;background:#8a8a8a;"></div>
</body></html>
